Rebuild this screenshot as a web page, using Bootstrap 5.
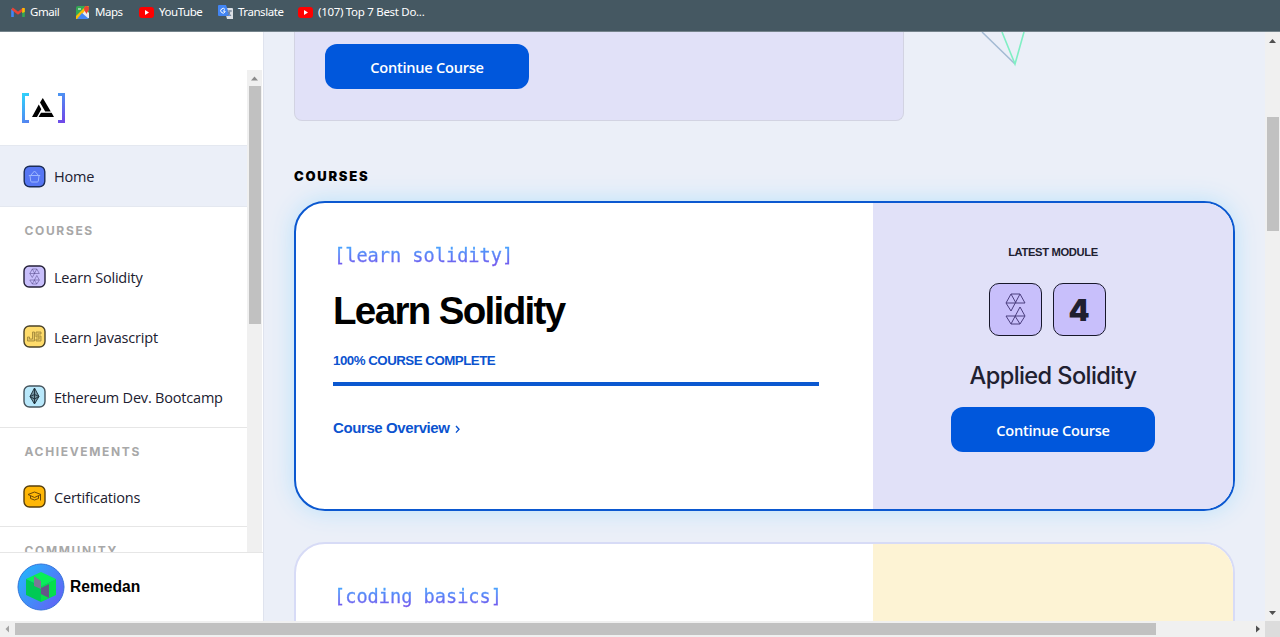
<!DOCTYPE html>
<html lang="en">
<head>
<meta charset="utf-8">
<title>Courses</title>
<link href="https://cdn.jsdelivr.net/npm/bootstrap@5.3.0/dist/css/bootstrap.min.css" rel="stylesheet">
<style>
body{font-family:"Open Sans","Noto Sans",sans-serif;background:#fff;height:637px;overflow:hidden;color:#202030}
svg{display:block;flex:none}
.bookmarks{height:32px;background:#455862;border-bottom:1px solid #74838b;color:#fff;font:11.5px/16px "Noto Sans","Open Sans",sans-serif;padding:4px 0 0 11px}
.bookmarks span{white-space:nowrap;letter-spacing:-.45px;margin-left:5px}
.viewport{height:589px}
.side{width:264px;background:#fff;border-right:1px solid #dfe3ee}
.side-scroll{height:521px;border-bottom:1px solid #e6e6e6}
.side-list{width:247px}
.brandbox{height:113px;padding:60px 0 0 21px}
.item{height:60px;padding-left:23px;gap:8px;font-size:14.5px;letter-spacing:-.2px;white-space:nowrap}
.item.home{height:62px;background:#ebeff8;border-top:1px solid #e4e8f0;border-bottom:1px solid #e4e8f0}
.item span{padding-top:1px}
.item svg{margin-top:-1px}
.head{height:40px;padding:17px 0 0 24.5px;font:700 12px/14px Inter,sans-serif;letter-spacing:1.65px;color:#a8a8a8}
.group{border-bottom:1px solid #e6e6e6}
.track{width:15px;background:#f0f0f0}
.side-track{margin-top:38px}
.thumb{background:#c1c1c1;width:12px}
.user{height:68px;padding-left:17px;gap:5px;font:700 15.6px "Liberation Sans",sans-serif;color:#000}
.main{background:#ebeff8;padding-left:30px}
.banner{width:610px;height:89px;background:#e1e1f8;border:1.5px solid #d2d3e2;border-top:0;border-radius:0 0 8px 8px;padding:12px 0 0 30px}
.go{width:204px;height:45px;border-radius:12px;background:#0057dc;color:#fff;font:600 14.6px/46px "Open Sans",sans-serif;letter-spacing:-.25px;padding:0;border:0}
.go:hover{background:#0050c8;color:#fff}
.title{font:900 13px/16px Inter,sans-serif;letter-spacing:1.75px;color:#000;margin:47px 0 17px}
.course{width:941px;height:310px;border:2px solid #d7dbf6;border-radius:31px;background:#fff;overflow:hidden}
.course.active{border-color:#0b58d0;box-shadow:0 0 24px #b9e2fb}
.info{width:577px;padding:38px 0 0 37px}
.panel{background:#e1e1f8}
.panel.js{background:#fdf3d4}
.tag{font:18.6px/30px "DejaVu Sans Mono",monospace;width:max-content;padding-left:1px;background:linear-gradient(#46a9ff 15%,#7358ee 80%);-webkit-background-clip:text;background-clip:text;color:transparent;-webkit-text-stroke:.3px transparent}
.name{font:700 38.5px/46px "Liberation Sans",sans-serif;letter-spacing:-1.65px;color:#000;margin:17px 0 0}
.done{font:700 13.3px/16px "Liberation Sans",sans-serif;letter-spacing:-.5px;color:#0b53cf;margin-top:19px}
.meter{width:486px;height:4px;background:#0b58d0;margin-top:13px}
.over{font:700 15px/20px "Liberation Sans",sans-serif;letter-spacing:-.4px;color:#0b53cf;margin-top:32px}
.latest{font:700 11.2px/14px "Liberation Sans",sans-serif;letter-spacing:-.35px;margin-top:42px}
.tile{width:53px;height:53px;border:1.4px solid #17172a;border-radius:10px;background:#c8bffb;font:900 30px Inter,sans-serif}
.mod{font:500 23.6px/30px Inter,sans-serif;letter-spacing:-.6px;margin:25px 0 16px}
.hbar{height:16px;background:#f0f0f0}
.hbar .grip{width:1141px;height:12px;background:#c1c1c1}
.corner{width:15px;height:16px;background:#dcdcdc}
</style>
</head>
<body>
<svg width="0" height="0" class="position-absolute"><defs>
<linearGradient id="br" x1="0" y1="0" x2="1" y2="1"><stop stop-color="#2fd0fb"/><stop offset="1" stop-color="#7048e8"/></linearGradient>
<g id="sol" fill="none" stroke="#4b3e7e" stroke-linejoin="round"><path d="M1 10 6 1H15L20 10H1L6 18 15 1M6 1 11 10"/><path d="M20 23 15 14 6 31H15L20 23H1L6 31M10 23 15 31"/></g>
</defs></svg>
<div class="bookmarks d-flex">
 <div class="d-flex" style="width:65px"><svg width="14" height="16" viewBox="0 0 14 16"><path d="M1.500 13V5" stroke="#4285f4" stroke-width="2.600"/><path d="M12.500 13V5" stroke="#34a853" stroke-width="2.600"/><path d="M1 4.500 7 9.200 13 4.500" fill="none" stroke="#ea4335" stroke-width="2.600"/><path d="M11.200 4h2.600v4l-2.600 1z" fill="#fbbc04"/></svg><span>Gmail</span></div>
 <div class="d-flex" style="width:63px"><svg width="14" height="16" viewBox="0 0 14 16"><rect y="2" width="13" height="13" rx="2" fill="#34a853"/><path d="M0 14 9 5l4 4v5z" fill="#e8eaed"/><path d="M0 12 10 2h3L2 15H0z" fill="#fbbc04"/><path d="m6 9 7 6H1z" fill="#4285f4"/><path d="M2 5h3" stroke="#fff"/><path d="M10.500 10C10 8 8 7 8 4.500a2.500 2.500 0 0 1 5 0C13 7 11 8 10.500 10" fill="#ea4335"/></svg><span>Maps</span></div>
 <div class="d-flex" style="width:79px"><svg width="16" height="16"><rect y="3" width="15" height="11" rx="3" fill="#f00"/><path d="m6 6 4 2.500-4 2.500z" fill="#fff"/></svg><span style="margin-left:4px">YouTube</span></div>
 <div class="d-flex" style="width:80px"><svg width="16" height="16"><path d="M6 4h8q1 0 1 1v10H9z" fill="#dce0e5"/><path d="M1 1h7l4 11H1q-1 0-1-1V2q0-1 1-1" fill="#4285f4"/><path d="M7 5.500A2.300 2.300 0 1 0 7 8V7H5" fill="none" stroke="#fff"/><path d="M9 7h5m-2-1v1q0 3-3 5m1-4 3 4" fill="none" stroke="#718096"/></svg><span style="margin-left:4px">Translate</span></div>
 <div class="d-flex"><svg width="16" height="16"><rect y="3" width="15" height="11" rx="3" fill="#f00"/><path d="m6 6 4 2.500-4 2.500z" fill="#fff"/></svg><span style="margin-left:4px;letter-spacing:-.3px">(107) Top 7 Best Do...</span></div>
</div>
<div class="viewport d-flex overflow-hidden">
 <aside class="side flex-shrink-0">
  <div class="side-scroll d-flex overflow-hidden">
   <div class="side-list">
    <div class="brandbox"><svg width="45" height="32"><path d="M8 2.500H2.500V29.500H8M37 2.500h5.500V29.500H37" fill="none" stroke="url(#br)" stroke-width="3"/><path d="M11 25 17.800 12.500 20.300 17.200 16 25zM19 10.500 21.800 6 29.800 19.500H24.200zM20 20.800H30.600L33 25H17.500z"/></svg></div>
    <nav>
     <div class="item home d-flex align-items-center"><svg width="23" height="23" style="margin-top:0"><rect x="1.200" y="1.200" width="20.600" height="20.600" rx="5.500" fill="#5676f3" stroke="#1b2c57" stroke-width="1.400"/><path d="M5.800 10.500H17.200M7.500 10.500 11.500 6l4 4.500M7 10.500l.7 5.500q.2 1 1 1h5.600q.8 0 1-1l.7-5.500" fill="none" stroke="#9db7ff"/></svg><span>Home</span></div>
     <div class="group">
      <div class="head">COURSES</div>
      <div class="item d-flex align-items-center"><svg width="23" height="23"><rect x="1" y="1" width="21" height="21" rx="5" fill="#c8bffb" stroke="#242039" stroke-width="1.400"/><use href="#sol" transform="translate(6.300 3.500) scale(.5)"/></svg><span>Learn Solidity</span></div>
      <div class="item d-flex align-items-center"><svg width="23" height="23"><rect x="1" y="1" width="21" height="21" rx="5.500" fill="#ffdc6b" stroke="#4b4329" stroke-width="1.400"/><path d="M9.500 7v7H6.500v-2H4.500v4h7V7zM18 7h-5v5h3v2h-3v2h5v-5h-3V9h3z" fill="#e3c463" stroke="#a48a3b" stroke-width=".9"/></svg><span>Learn Javascript</span></div>
      <div class="item d-flex align-items-center"><svg width="23" height="23"><rect x="1" y="1" width="21" height="21" rx="5.500" fill="#b9e8fb" stroke="#45545d" stroke-width="1.400"/><path d="M11.500 3 7 11.500l4.500 7.500 4.500-7.500zM7 11.500l4.500 2.500 4.500-2.500-4.500-2zM11.500 3v16" fill="#7797a5" stroke="#223641"/></svg><span>Ethereum Dev. Bootcamp</span></div>
     </div>
     <div class="group" style="height:99px">
      <div class="head" style="height:39px">ACHIEVEMENTS</div>
      <div class="item d-flex align-items-center"><svg width="23" height="23"><rect x="1" y="1" width="21" height="21" rx="5.500" fill="#ffb707" stroke="#573f0c" stroke-width="1.400"/><path d="m5 9.500 6.500-2.500L18 9.500l-6.500 3zM7.500 11v2.500q4 3 8 0V11M17.500 9.500v6" fill="none" stroke="#6b4707"/></svg><span>Certifications</span></div>
     </div>
     <div class="head">COMMUNITY</div>
    </nav>
   </div>
   <div class="track side-track"><svg width="15" height="16"><path d="M4 10.500h7L7.500 6.500z" fill="#8b8b8b"/></svg><div class="thumb" style="height:238px;margin-left:2px"></div></div>
  </div>
  <div class="user d-flex align-items-center"><svg width="48" height="48"><defs><linearGradient id="av" x1="0" y1=".2" x2="1" y2=".9"><stop stop-color="#24b5fc"/><stop offset="1" stop-color="#665cf5"/></linearGradient></defs><circle cx="24" cy="24" r="23" fill="url(#av)" stroke="#3474db"/><path d="m24 9 15 7-15 7-15-7z" fill="#08ef58"/><path d="m9 16 15 7v16L9 32z" fill="#00c955"/><path d="m24 23 15-7v16l-15 7z" fill="#05df4b"/><path d="m17 13 7 5v8l-7-3z" fill="#7b7896"/><path d="m24 25 8-4v14l-8-4z" fill="#655588"/></svg><span>Remedan</span></div>
 </aside>
 <main class="main flex-grow-1 overflow-hidden">
  <div class="d-flex"><div class="banner"><button class="btn go">Continue Course</button></div><svg width="50" height="36" style="margin-left:76px" fill="none"><path d="M2 0 35 32" stroke="#a3bad3" stroke-width="1.500"/><path d="M22 0 35 32 44 0" stroke="#80efc4" stroke-width="1.600"/></svg></div>
  <h2 class="title">COURSES</h2>
  <section class="course active d-flex">
   <div class="info"><div class="tag">[learn solidity]</div><h1 class="name">Learn Solidity</h1><div class="done">100% COURSE COMPLETE</div><div class="meter"></div><div class="over d-flex"><span>Course Overview</span><svg width="8" height="20" style="margin-left:4px"><path d="m2 8 3 3.300L2 14.600" fill="none" stroke="#0b53cf" stroke-width="1.400"/></svg></div></div>
   <div class="panel flex-grow-1 d-flex flex-column align-items-center"><div class="latest">LATEST MODULE</div>
    <div class="d-flex" style="gap:11px;margin:24px 12px 0 0"><div class="tile d-flex align-items-center justify-content-center"><svg width="21" height="33"><use href="#sol"/></svg></div><div class="tile d-flex align-items-center justify-content-center">4</div></div>
    <div class="mod">Applied Solidity</div><button class="btn go">Continue Course</button></div>
  </section>
  <section class="course d-flex" style="margin-top:31px"><div class="info"><div class="tag">[coding basics]</div></div><div class="panel js flex-grow-1"></div></section>
 </main>
 <div class="track d-flex flex-column"><svg width="15" height="16"><path d="M4 11h7L7.500 7z" fill="#505050"/></svg><div class="thumb" style="height:114px;margin:69px 0 0 2px"></div><svg class="mt-auto" width="15" height="16"><path d="M4 6h7l-3.500 4z" fill="#505050"/></svg></div>
</div>
<div class="hbar d-flex align-items-center"><svg width="15" height="16"><path d="M9 4.500v7L5.500 8z" fill="#a3a3a3"/></svg><div class="grip"></div><svg class="ms-auto" width="15" height="16"><path d="M6 4.500v7L10 8z" fill="#505050"/></svg><div class="corner"></div></div>
<script src="https://cdn.jsdelivr.net/npm/bootstrap@5.3.0/dist/js/bootstrap.bundle.min.js"></script>
</body>
</html>
